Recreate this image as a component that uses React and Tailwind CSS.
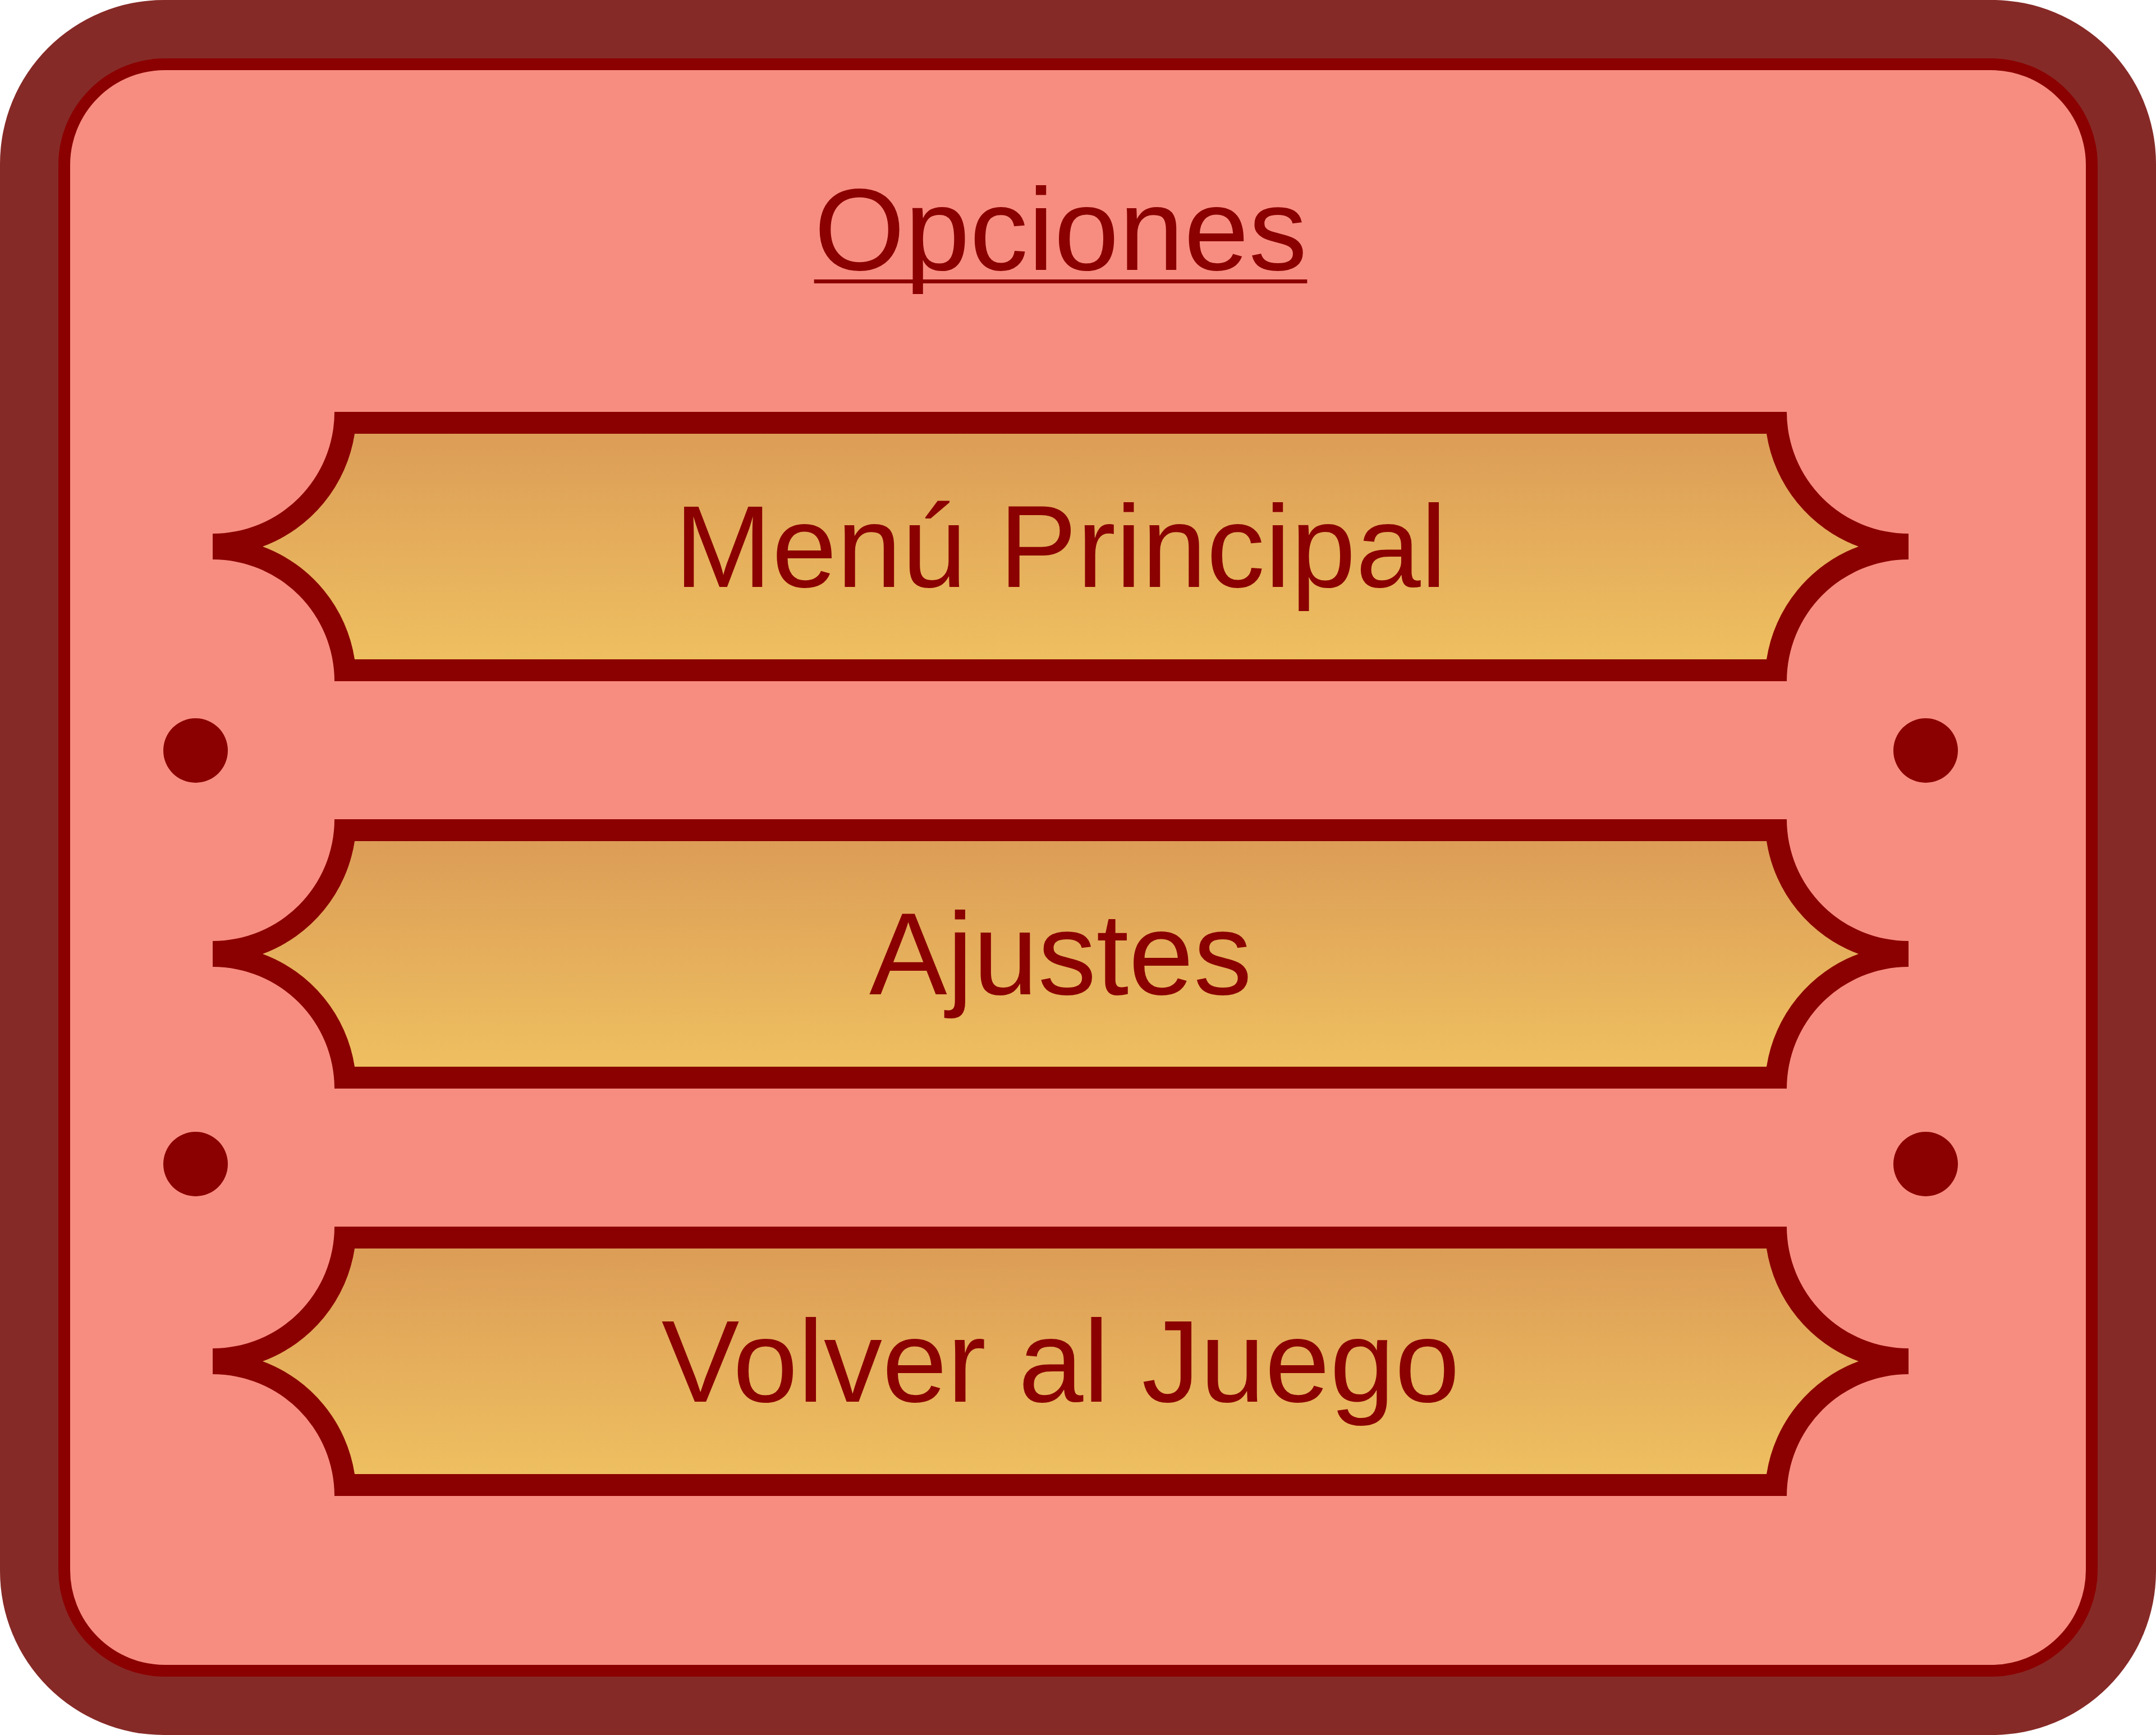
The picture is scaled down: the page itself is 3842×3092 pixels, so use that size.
import React from 'react';

// Decorative frame: outer dark red outline with concave quarter-circle corners,
// and an inset gradient panel (39px in) following the same corners.
const OUTER =
    'M217 0 H2805 A217 217 0 0 0 3022 217 V263 A217 217 0 0 0 2805 480 H217 A217 217 0 0 0 0 263 V217 A217 217 0 0 0 217 0 Z';
const INNER =
    'M253 39 H2769 A256 256 0 0 0 2933 240 A256 256 0 0 0 2769 441 H253 A256 256 0 0 0 89 240 A256 256 0 0 0 253 39 Z';

const FrameButton = ({ label, id }) => (
    <button className="relative flex h-[480px] w-[3022px] items-center justify-center">
        <svg className="absolute inset-0" width="3022" height="480" viewBox="0 0 3022 480">
            <defs>
                <linearGradient id={id} x1="0" y1="0" x2="0" y2="1">
                    <stop offset="0%" stopColor="#dc9d57" />
                    <stop offset="100%" stopColor="#eebf60" />
                </linearGradient>
            </defs>
            <path d={OUTER} fill="#8b0000" />
            <path d={INNER} fill={`url(#${id})`} />
        </svg>
        <span className="relative text-[208px] leading-none text-[#8b0000]">{label}</span>
    </button>
);

const DotRow = ({ className = '' }) => (
    <div className={`flex h-[246px] w-[3198px] items-center justify-between ${className}`}>
        <span className="h-[115px] w-[115px] rounded-full bg-[#8b0000]" />
        <span className="h-[115px] w-[115px] rounded-full bg-[#8b0000]" />
    </div>
);

export default function App() {
    return (
        <div className="h-[3092px] w-[3842px] rounded-[292px] bg-[#862a27] p-[104px] font-['Liberation_Sans',Arial,sans-serif]">
            <div className="flex h-full flex-col items-center rounded-[190px] border-[21px] border-[#8b0000] bg-[#f78d80] pt-[180px] pr-[62px] text-[#8b0000]">
                <h1 className="text-[208px] font-normal leading-none underline decoration-[7px] underline-offset-[17px] [text-decoration-skip-ink:none]">
                    Opciones
                </h1>

                <div className="mt-[221px] flex flex-col items-center">
                    <FrameButton id="btn-grad-1" label="Menú Principal" />
                    <DotRow />
                    <FrameButton id="btn-grad-2" label="Ajustes" />
                    <DotRow className="pt-[22px]" />
                    <FrameButton id="btn-grad-3" label="Volver al Juego" />
                </div>
            </div>
        </div>
    );
}
